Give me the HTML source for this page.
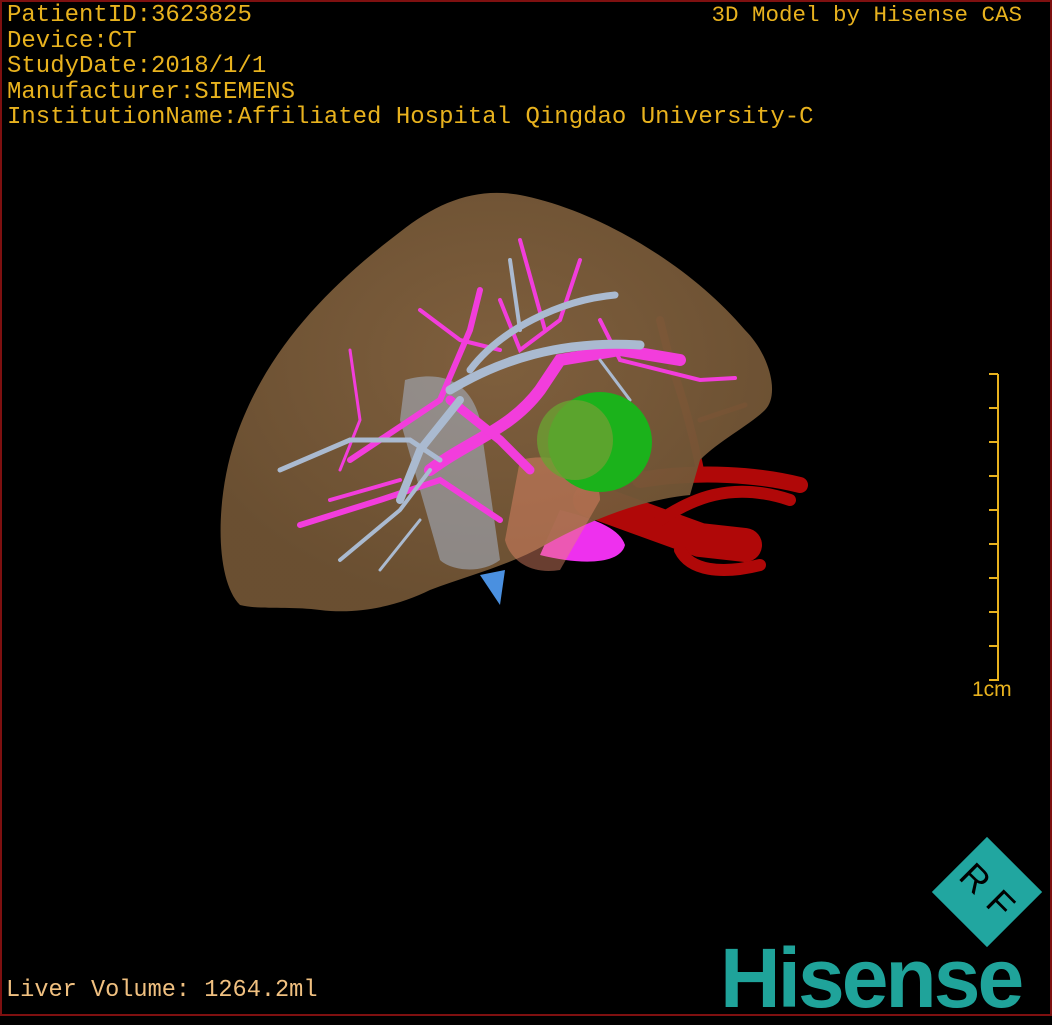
<!DOCTYPE html>
<html><head><meta charset="utf-8"><style>
html,body{margin:0;padding:0;background:#000;}
body{width:1052px;height:1020px;position:relative;overflow:hidden;font-family:"Liberation Mono","Noto Sans CJK SC",monospace;}
.frame{position:absolute;left:0;top:0;width:1048px;height:1012px;border:2px solid #7e1010;}
.info{position:absolute;left:7px;top:3px;color:#e8b21e;font-size:24px;line-height:25.5px;white-space:pre;}
.tr{position:absolute;right:30px;top:3px;color:#e8b21e;font-size:22.5px;line-height:25px;}
.vol{position:absolute;left:6px;top:977px;color:#f0c080;font-size:23.6px;line-height:28px;white-space:pre;}
.cm{position:absolute;left:972px;top:678px;color:#e8b21e;font-family:"Liberation Sans",sans-serif;font-size:21px;}
.his{position:absolute;left:720px;top:938px;color:#1fa39a;font-family:"Liberation Sans",sans-serif;font-weight:bold;font-size:84px;letter-spacing:-3px;line-height:80px;}
.rf{position:absolute;left:948px;top:853px;width:78px;height:78px;background:#21a6a0;transform:rotate(45deg);}
.rf span{position:absolute;top:18px;font-family:"Liberation Sans",sans-serif;font-size:36px;line-height:40px;color:#000;}
</style></head><body>
<div class="frame"></div>
<svg width="1052" height="1020" style="position:absolute;left:0;top:0">
<defs>
<radialGradient id="lg" cx="0.5" cy="0.4" r="0.6"><stop offset="0" stop-color="#846340"/><stop offset="1" stop-color="#6e5233"/></radialGradient>
</defs>
<g stroke="#b00808" stroke-linecap="round" fill="none">
<path d="M590 500 L700 540 L745 545" stroke-width="34"/>
<path d="M640 480 C700 470 760 475 800 485" stroke-width="16"/>
<path d="M660 520 C690 500 730 480 790 500" stroke-width="12"/>
<path d="M680 550 C690 570 720 575 760 565" stroke-width="12"/>
<path d="M700 470 C690 420 680 390 670 360 L660 320" stroke-width="8"/>
<path d="M700 420 L745 405" stroke-width="5"/>
</g>
<path d="M560 510 C600 520 620 530 625 545 C620 565 580 565 540 555 Z" fill="#ee30ee"/>
<path d="M480 575 L500 605 L505 570 Z" fill="#4a90e0"/>
<path d="M240 605 C215 580 215 500 235 440 C265 350 330 285 400 232 C440 200 480 186 525 196 C600 212 690 265 745 330 C770 355 780 395 765 410 C750 425 720 440 700 460 L690 495 C640 500 590 520 545 545 C510 565 470 575 430 590 C400 605 360 615 320 610 C290 606 260 610 240 605 Z" fill="url(#lg)" opacity="0.96"/>
<path d="M405 380 C440 370 470 380 480 420 L500 560 C480 575 450 570 440 560 L400 420 Z" fill="#a7b5c8" opacity="0.55"/>
<path d="M520 460 C560 450 600 470 600 500 L560 570 C530 575 510 560 505 540 Z" fill="#e88a6a" opacity="0.45"/>
<g stroke="#f23ddc" stroke-linecap="round" fill="none">
<path d="M430 470 C470 440 510 430 540 390 L560 360 L620 350 L680 360" stroke-width="12"/>
<path d="M450 400 L500 440 L530 470" stroke-width="9"/>
<path d="M350 460 L440 400 L470 330 L480 290" stroke-width="6"/>
<path d="M300 525 L380 500 L440 480 L500 520" stroke-width="6"/>
<path d="M330 500 L400 480" stroke-width="4"/>
<path d="M350 350 L360 420 L340 470" stroke-width="3"/>
<path d="M500 300 L520 350 L560 320 L580 260" stroke-width="4"/>
<path d="M520 240 L545 330" stroke-width="4"/>
<path d="M420 310 L460 340 L500 350" stroke-width="4"/>
<path d="M600 320 L620 360 L700 380 L735 378" stroke-width="4"/>
</g>
<g stroke="#aabad0" stroke-linecap="round" fill="none">
<path d="M450 390 C500 360 560 340 640 345" stroke-width="9"/>
<path d="M470 370 C500 330 560 300 615 295" stroke-width="7"/>
<path d="M400 500 L420 450 L460 400" stroke-width="8"/>
<path d="M280 470 L350 440 L410 440 L440 460" stroke-width="5"/>
<path d="M340 560 L400 510 L430 470" stroke-width="4"/>
<path d="M380 570 L420 520" stroke-width="3"/>
<path d="M520 330 L510 260" stroke-width="4"/>
<path d="M600 360 L630 400" stroke-width="3"/>
</g>
<ellipse cx="600" cy="442" rx="52" ry="50" fill="#1bb21b"/>
<ellipse cx="575" cy="440" rx="38" ry="40" fill="#6ca032" opacity="0.8"/>
<g stroke="#e8b21e" stroke-width="2">
<line x1="998" y1="374" x2="998" y2="681"/>
<line x1="989" y1="374" x2="998" y2="374"/><line x1="989" y1="408" x2="998" y2="408"/><line x1="989" y1="442" x2="998" y2="442"/><line x1="989" y1="476" x2="998" y2="476"/><line x1="989" y1="510" x2="998" y2="510"/><line x1="989" y1="544" x2="998" y2="544"/><line x1="989" y1="578" x2="998" y2="578"/><line x1="989" y1="612" x2="998" y2="612"/><line x1="989" y1="646" x2="998" y2="646"/><line x1="989" y1="680" x2="998" y2="680"/>
</g>
</svg>
<div class="info">PatientID:3623825
Device:CT
StudyDate:2018/1/1
Manufacturer:SIEMENS
InstitutionName:Affiliated Hospital Qingdao University-C</div>
<div class="tr">3D Model by Hisense CAS</div>
<div class="cm">1cm</div>
<div class="rf"><span style="left:8px">R</span><span style="left:46px">F</span></div>
<div class="his">Hisense</div>
<div class="vol">Liver Volume: 1264.2ml</div>
</body></html>
